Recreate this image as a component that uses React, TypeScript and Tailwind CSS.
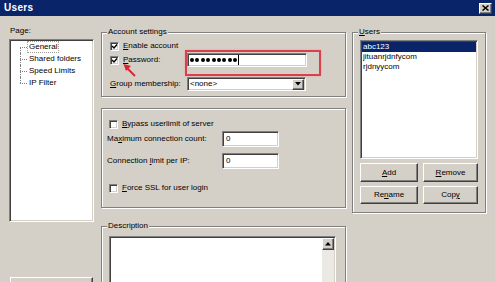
import React from 'react';

const sunken =
  'bg-white border border-t-[#808080] border-l-[#808080] border-r-white border-b-white shadow-[inset_1px_1px_0_#404040,inset_-1px_-1px_0_#d4d0c8]';
const raised =
  'bg-[#d4d0c8] border border-t-white border-l-white border-r-[#404040] border-b-[#404040] shadow-[inset_-1px_-1px_0_#808080]';
const etched = 'relative border border-[#808080] shadow-[inset_1px_1px_0_#fff,1px_1px_0_#fff]';

function Check({ on }: { on?: boolean }) {
  return (
    <span
      className={`flex h-[9px] w-[9px] shrink-0 items-center justify-center ${sunken}`}
    >
      {on && (
        <svg width="7" height="7" viewBox="0 0 7 7">
          <path d="M1 3 L3 5 L6 1.5" fill="none" stroke="#000" strokeWidth="1.4" />
        </svg>
      )}
    </span>
  );
}

function Group({ label, className, children }: { label?: React.ReactNode; className?: string; children: React.ReactNode }) {
  return (
    <div className={`${etched} ${className ?? ''}`}>
      {label && (
        <span className="absolute -top-[6px] left-[5px] bg-[#d4d0c8] px-[1px] leading-[10px]">{label}</span>
      )}
      {children}
    </div>
  );
}

function TreeRow({ text, first, last, selected }: { text: string; first?: boolean; last?: boolean; selected?: boolean }) {
  return (
    <div className="flex h-[12px] items-stretch">
      <div className="flex w-[7px] flex-col">
        <div className={`h-[6px] ${first ? '' : 'border-l border-dotted border-[#808080]'}`} />
        <div
          className={`h-[6px] border-t border-dotted border-[#808080] ${last ? '' : 'border-l'}`}
        />
      </div>
      <div className="flex items-center">
        <span className={`px-[1px] leading-[10px] ${selected ? 'border border-dotted border-[#a0a0a0]' : 'border border-transparent'}`}>
          {text}
        </span>
      </div>
    </div>
  );
}

function Btn({ w, h, children }: { w: string; h: string; children?: React.ReactNode }) {
  return (
    <div className={`flex items-center justify-center ${w} ${h} ${raised}`}>{children}</div>
  );
}

export default function App() {
  return (
    <div className="relative h-[282px] w-[495px] overflow-hidden bg-[#d4d0c8] font-['Liberation_Sans',Arial,sans-serif] text-[8px] leading-[10px] text-black">
      {/* title bar */}
      <div className="flex h-[16px] items-center justify-between bg-[#0a246a] pl-[4px] pr-[3px]">
        <span className="text-[10px] font-bold tracking-[0.3px] text-white">Users</span>
        <div className={`flex h-[11px] w-[13px] items-center justify-center ${raised}`}>
          <svg width="7" height="6" viewBox="0 0 7 6">
            <path d="M0.5 0.5 L6.5 5.5 M6.5 0.5 L0.5 5.5" stroke="#000" strokeWidth="1.5" />
          </svg>
        </div>
      </div>

      <div className="flex items-start pl-[9px]">
        {/* page list */}
        <div className="flex w-[85px] flex-col pt-[10px]">
          <div className="h-[10px] pl-[1px]">Page:</div>
          <div className={`mt-[3px] h-[183px] pl-[10px] pt-[1px] ${sunken}`}>
            <TreeRow text="General" first selected />
            <TreeRow text="Shared folders" />
            <TreeRow text="Speed Limits" />
            <TreeRow text="IP Filter" last />
          </div>
          <div className="ml-[1px] mt-[55px]">
            <Btn w="w-[83px]" h="h-[20px]" />
          </div>
        </div>

        {/* settings */}
        <div className="ml-[7px] flex w-[245px] flex-col pt-[16px]">
          <Group label="Account settings" className="pb-[5px] pl-[8px] pt-[8px]">
            <div className="flex h-[10px] items-center">
              <Check on />
              <span className="ml-[4px]"><u>E</u>nable account</span>
            </div>
            <div className="mt-[2px] flex h-[14px] items-center">
              <div className="flex w-[77px] items-center">
                <Check on />
                <span className="ml-[4px]"><u>P</u>assword:</span>
              </div>
              <div className={`flex h-[14px] w-[120px] items-center pl-[2px] ${sunken}`}>
                <div className="flex gap-[1.4px]">
                  {Array.from({ length: 9 }).map((_, i) => (
                    <span key={i} className="h-[4px] w-[4px] rounded-full bg-black" />
                  ))}
                </div>
                <span className="ml-[1px] h-[10px] w-[1px] bg-black" />
              </div>
            </div>
            <div className="mt-[10px] flex h-[14px] items-center">
              <span className="w-[77px]"><u>G</u>roup membership:</span>
              <div className={`flex h-[14px] w-[119px] items-center justify-between pl-[2px] pr-[1px] ${sunken}`}>
                <span>&lt;none&gt;</span>
                <div className={`flex h-[11px] w-[12px] items-center justify-center ${raised}`}>
                  <svg width="6" height="4" viewBox="0 0 6 4">
                    <path d="M0 0 H6 L3 3.5 Z" fill="#000" />
                  </svg>
                </div>
              </div>
            </div>
          </Group>

          <Group className="mt-[11px] pb-[14px] pl-[5px] pt-[10px]">
            <div className="ml-[2px] flex h-[10px] items-center">
              <Check />
              <span className="ml-[4px]"><u>B</u>ypass userlimit of server</span>
            </div>
            <div className="mt-[2px] flex h-[16px] items-center">
              <span className="w-[115px]">Ma<u>x</u>imum connection count:</span>
              <div className={`flex h-[16px] w-[57px] items-center pl-[3px] ${sunken}`}>0</div>
            </div>
            <div className="mt-[6px] flex h-[16px] items-center">
              <span className="w-[115px]">Connection <u>l</u>imit per IP:</span>
              <div className={`flex h-[16px] w-[57px] items-center pl-[3px] ${sunken}`}>0</div>
            </div>
            <div className="ml-[2px] mt-[14px] flex h-[10px] items-center">
              <Check />
              <span className="ml-[4px]"><u>F</u>orce SSL for user login</span>
            </div>
          </Group>

          <Group label="Description" className="mt-[18px] pl-[7px] pr-[9px] pt-[9px]">
            <div className={`flex h-[60px] justify-end ${sunken}`}>
              <div className="mr-[1px] mt-[1px] flex w-[12px] flex-col bg-[#ebe9e4]">
                <div className={`flex h-[12px] items-center justify-center ${raised}`}>
                  <svg width="6" height="4" viewBox="0 0 6 4">
                    <path d="M0 3.5 H6 L3 0 Z" fill="#000" />
                  </svg>
                </div>
              </div>
            </div>
          </Group>
        </div>

        {/* users */}
        <div className="ml-[6px] flex w-[134px] flex-col pt-[16px]">
          <Group label={<><u>U</u>sers</>} className="pb-[8px] pl-[7px] pt-[7px]">
            <div className={`h-[119px] w-[118px] pl-[1px] pr-[1px] ${sunken}`}>
              <div className="mt-[1px] h-[10px] bg-[#0a246a] pl-[1px] text-white">abc123</div>
              <div className="h-[10px] pl-[1px]">jituanrjdnfycom</div>
              <div className="h-[10px] pl-[1px]">rjdnyycom</div>
            </div>
            <div className="mt-[4px] flex gap-[5px]">
              <Btn w="w-[58px]" h="h-[19px]"><u>A</u>dd</Btn>
              <Btn w="w-[55px]" h="h-[19px]"><u>R</u>emove</Btn>
            </div>
            <div className="mt-[4px] flex gap-[5px]">
              <Btn w="w-[58px]" h="h-[18px]">Re<u>n</u>ame</Btn>
              <Btn w="w-[55px]" h="h-[18px]">Cop<u>y</u></Btn>
            </div>
          </Group>
        </div>
      </div>

      {/* red annotation */}
      <div className="absolute left-[185px] top-[50px] h-[26px] w-[136px] border-2 border-[#d8404c] shadow-[0_0_2px_#f0a0a8]" />
      <svg className="absolute left-[120px] top-[61px]" width="18" height="18" viewBox="0 0 18 18">
        <path d="M3.5 3 L11 5 L6 10 Z" fill="#d8262b" />
        <path d="M7.5 7.5 L15 15" stroke="#d8262b" strokeWidth="2" />
      </svg>
    </div>
  );
}
